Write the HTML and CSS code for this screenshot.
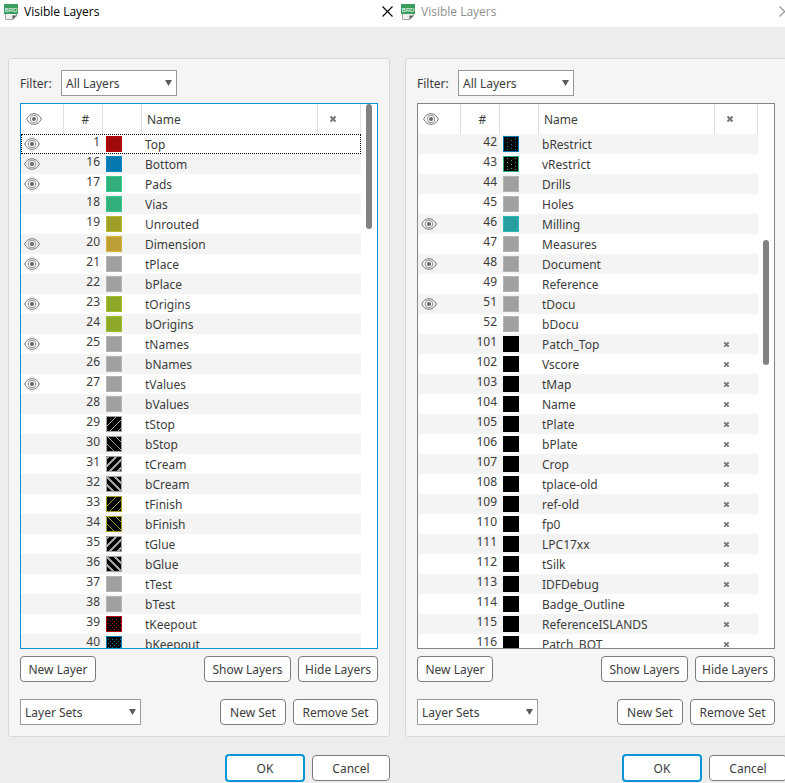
FILE: index.html
```html
<!DOCTYPE html>
<html lang="en">
<head>
<meta charset="utf-8">
<title>Visible Layers</title>
<link rel="stylesheet" href="styles.css">
</head>
<body>
<svg class="defs" aria-hidden="true">
  <symbol id="brd" viewBox="0 0 14 16">
    <path d="M1.500 7V15.500H9L12.500 12V7Z" fill="#f0f0f0" stroke="#a5a5a5"/>
    <path d="M8.500 15.500V11.500H12.500Z" fill="#555"/>
    <rect x="0" y="0" width="14" height="10" fill="#3a9e5f"/>
    <text x="7" y="7.500" text-anchor="middle" class="brd-text">BRD</text>
  </symbol>
  <symbol id="eye" viewBox="0 0 16 12">
    <path d="M.6 6C2.500 2.300 5 .7 8 .7S13.500 2.300 15.400 6C13.500 9.700 11 11.300 8 11.300S2.500 9.700 .6 6Z" fill="none" stroke="#747474"/>
    <circle cx="8" cy="6" r="3.800" fill="none" stroke="#8a8a8a" stroke-width=".9"/>
    <circle cx="8" cy="6" r="2" fill="#666"/>
  </symbol>
  <symbol id="mark" viewBox="0 0 8 8"><path d="M1.500 1.500L6.500 6.500M6.500 1.500L1.500 6.500" stroke="#757575" stroke-width="2"/></symbol>
  <symbol id="close" viewBox="0 0 11 11"><path d="M.5 .5L10.500 10.500M10.500 .5L.5 10.500" stroke="currentColor" stroke-width="1.100"/></symbol>
  <symbol id="thin-up" viewBox="0 0 16 16"><rect width="16" height="16"/><path d="M0 11L11 0M3 16L16 3M11 16L16 11" stroke="currentColor"/><rect x=".5" y=".5" width="15" height="15" fill="none" stroke="currentColor"/></symbol>
  <symbol id="thin-down" viewBox="0 0 16 16"><rect width="16" height="16"/><path d="M9 0L16 7M1 0L16 15M0 7L9 16" stroke="currentColor"/><rect x=".5" y=".5" width="15" height="15" fill="none" stroke="currentColor"/></symbol>
  <symbol id="wide-up" viewBox="0 0 16 16"><rect width="16" height="16"/><path d="M0 3L3 0M0 11L11 0M3 16L16 3M11 16L16 11" stroke="currentColor" stroke-width="2"/><rect x=".5" y=".5" width="15" height="15" fill="none" stroke="currentColor"/></symbol>
  <symbol id="wide-down" viewBox="0 0 16 16"><rect width="16" height="16"/><path d="M8 0L16 8M0 0L16 16M0 8L8 16" stroke="currentColor" stroke-width="2"/><rect x=".5" y=".5" width="15" height="15" fill="none" stroke="currentColor"/></symbol>
  <symbol id="dots" viewBox="0 0 16 16"><rect width="16" height="16"/><path d="M2 3.500H15M2 7.500H15M2 11.500H15" stroke="currentColor" stroke-dasharray="1 3"/><path d="M4 5.500H15M4 9.500H15M4 13.500H15" stroke="currentColor" stroke-dasharray="1 3"/><rect x=".5" y=".5" width="15" height="15" fill="none" stroke="currentColor"/></symbol>
  <symbol id="sparse" viewBox="0 0 16 16"><rect width="16" height="16"/><path d="M4 2.500H15M4 6.500H15M4 10.500H15M4 13.500H15" stroke="currentColor" stroke-dasharray="1 7"/><path d="M8 4.500H15M8 8.500H15M8 12.500H15" stroke="currentColor" stroke-dasharray="1 7"/><rect x=".5" y=".5" width="15" height="15" fill="none" stroke="currentColor"/></symbol>
</svg>
<main class="desktop">
  <section class="dialog">
    <header class="titlebar">
      <svg class="app-icon"><use href="#brd"/></svg>
      <h1>Visible Layers</h1>
      <button class="close" aria-label="Close"><svg><use href="#close"/></svg></button>
    </header>
    <div class="panel">
      <div class="filter">
        <label for="filter-a">Filter:</label>
        <span class="combo filter-combo"><select id="filter-a"><option>All Layers</option></select></span>
      </div>
      <div class="list active">
        <table>
          <thead><tr><th class="vis"><svg class="eye"><use href="#eye"/></svg></th><th class="num">#</th><th class="color"></th><th class="name">Name</th><th class="used"><svg class="mark"><use href="#mark"/></svg></th></tr></thead>
          <tbody>
            <tr class="current"><td class="vis"><svg class="eye"><use href="#eye"/></svg></td><td class="num">1</td><td class="color"><i class="swatch red"></i></td><td class="name">Top</td><td class="used"></td></tr>
            <tr><td class="vis"><svg class="eye"><use href="#eye"/></svg></td><td class="num">16</td><td class="color"><i class="swatch blue"></i></td><td class="name">Bottom</td><td class="used"></td></tr>
            <tr><td class="vis"><svg class="eye"><use href="#eye"/></svg></td><td class="num">17</td><td class="color"><i class="swatch green"></i></td><td class="name">Pads</td><td class="used"></td></tr>
            <tr><td class="vis"></td><td class="num">18</td><td class="color"><i class="swatch green"></i></td><td class="name">Vias</td><td class="used"></td></tr>
            <tr><td class="vis"></td><td class="num">19</td><td class="color"><i class="swatch olive"></i></td><td class="name">Unrouted</td><td class="used"></td></tr>
            <tr><td class="vis"><svg class="eye"><use href="#eye"/></svg></td><td class="num">20</td><td class="color"><i class="swatch gold"></i></td><td class="name">Dimension</td><td class="used"></td></tr>
            <tr><td class="vis"><svg class="eye"><use href="#eye"/></svg></td><td class="num">21</td><td class="color"><i class="swatch gray"></i></td><td class="name">tPlace</td><td class="used"></td></tr>
            <tr><td class="vis"></td><td class="num">22</td><td class="color"><i class="swatch gray"></i></td><td class="name">bPlace</td><td class="used"></td></tr>
            <tr><td class="vis"><svg class="eye"><use href="#eye"/></svg></td><td class="num">23</td><td class="color"><i class="swatch lime"></i></td><td class="name">tOrigins</td><td class="used"></td></tr>
            <tr><td class="vis"></td><td class="num">24</td><td class="color"><i class="swatch lime"></i></td><td class="name">bOrigins</td><td class="used"></td></tr>
            <tr><td class="vis"><svg class="eye"><use href="#eye"/></svg></td><td class="num">25</td><td class="color"><i class="swatch gray"></i></td><td class="name">tNames</td><td class="used"></td></tr>
            <tr><td class="vis"></td><td class="num">26</td><td class="color"><i class="swatch gray"></i></td><td class="name">bNames</td><td class="used"></td></tr>
            <tr><td class="vis"><svg class="eye"><use href="#eye"/></svg></td><td class="num">27</td><td class="color"><i class="swatch gray"></i></td><td class="name">tValues</td><td class="used"></td></tr>
            <tr><td class="vis"></td><td class="num">28</td><td class="color"><i class="swatch gray"></i></td><td class="name">bValues</td><td class="used"></td></tr>
            <tr><td class="vis"></td><td class="num">29</td><td class="color"><svg class="pattern ink-gray"><use href="#thin-up"/></svg></td><td class="name">tStop</td><td class="used"></td></tr>
            <tr><td class="vis"></td><td class="num">30</td><td class="color"><svg class="pattern ink-gray"><use href="#thin-down"/></svg></td><td class="name">bStop</td><td class="used"></td></tr>
            <tr><td class="vis"></td><td class="num">31</td><td class="color"><svg class="pattern ink-gray"><use href="#wide-up"/></svg></td><td class="name">tCream</td><td class="used"></td></tr>
            <tr><td class="vis"></td><td class="num">32</td><td class="color"><svg class="pattern ink-gray"><use href="#wide-down"/></svg></td><td class="name">bCream</td><td class="used"></td></tr>
            <tr><td class="vis"></td><td class="num">33</td><td class="color"><svg class="pattern ink-olive"><use href="#thin-up"/></svg></td><td class="name">tFinish</td><td class="used"></td></tr>
            <tr><td class="vis"></td><td class="num">34</td><td class="color"><svg class="pattern ink-olive"><use href="#thin-down"/></svg></td><td class="name">bFinish</td><td class="used"></td></tr>
            <tr><td class="vis"></td><td class="num">35</td><td class="color"><svg class="pattern ink-gray"><use href="#wide-up"/></svg></td><td class="name">tGlue</td><td class="used"></td></tr>
            <tr><td class="vis"></td><td class="num">36</td><td class="color"><svg class="pattern ink-gray"><use href="#wide-down"/></svg></td><td class="name">bGlue</td><td class="used"></td></tr>
            <tr><td class="vis"></td><td class="num">37</td><td class="color"><i class="swatch gray"></i></td><td class="name">tTest</td><td class="used"></td></tr>
            <tr><td class="vis"></td><td class="num">38</td><td class="color"><i class="swatch gray"></i></td><td class="name">bTest</td><td class="used"></td></tr>
            <tr><td class="vis"></td><td class="num">39</td><td class="color"><svg class="pattern ink-red"><use href="#dots"/></svg></td><td class="name">tKeepout</td><td class="used"></td></tr>
            <tr><td class="vis"></td><td class="num">40</td><td class="color"><svg class="pattern ink-blue"><use href="#dots"/></svg></td><td class="name">bKeepout</td><td class="used"></td></tr>
          </tbody>
        </table>
        <div class="thumb at-top"></div>
      </div>
      <div class="actions">
        <button class="new-layer first">New Layer</button>
        <button class="show">Show Layers</button>
        <button class="hide">Hide Layers</button>
      </div>
      <div class="actions sets">
        <span class="combo sets-combo first"><select aria-label="Layer Sets"><option>Layer Sets</option></select></span>
        <button class="new-set">New Set</button>
        <button class="remove-set">Remove Set</button>
      </div>
    </div>
    <footer class="confirm">
      <button class="ok">OK</button>
      <button class="cancel">Cancel</button>
    </footer>
  </section>

  <section class="dialog inactive">
    <header class="titlebar">
      <svg class="app-icon"><use href="#brd"/></svg>
      <h1>Visible Layers</h1>
      <button class="close" aria-label="Close"><svg><use href="#close"/></svg></button>
    </header>
    <div class="panel">
      <div class="filter">
        <label for="filter-b">Filter:</label>
        <span class="combo filter-combo"><select id="filter-b"><option>All Layers</option></select></span>
      </div>
      <div class="list">
        <table class="odd-shaded">
          <thead><tr><th class="vis"><svg class="eye"><use href="#eye"/></svg></th><th class="num">#</th><th class="color"></th><th class="name">Name</th><th class="used"><svg class="mark"><use href="#mark"/></svg></th></tr></thead>
          <tbody>
            <tr><td class="vis"></td><td class="num">42</td><td class="color"><svg class="pattern ink-blue"><use href="#sparse"/></svg></td><td class="name">bRestrict</td><td class="used"></td></tr>
            <tr><td class="vis"></td><td class="num">43</td><td class="color"><svg class="pattern ink-green"><use href="#sparse"/></svg></td><td class="name">vRestrict</td><td class="used"></td></tr>
            <tr><td class="vis"></td><td class="num">44</td><td class="color"><i class="swatch gray"></i></td><td class="name">Drills</td><td class="used"></td></tr>
            <tr><td class="vis"></td><td class="num">45</td><td class="color"><i class="swatch gray"></i></td><td class="name">Holes</td><td class="used"></td></tr>
            <tr><td class="vis"><svg class="eye"><use href="#eye"/></svg></td><td class="num">46</td><td class="color"><i class="swatch teal"></i></td><td class="name">Milling</td><td class="used"></td></tr>
            <tr><td class="vis"></td><td class="num">47</td><td class="color"><i class="swatch gray"></i></td><td class="name">Measures</td><td class="used"></td></tr>
            <tr><td class="vis"><svg class="eye"><use href="#eye"/></svg></td><td class="num">48</td><td class="color"><i class="swatch gray"></i></td><td class="name">Document</td><td class="used"></td></tr>
            <tr><td class="vis"></td><td class="num">49</td><td class="color"><i class="swatch gray"></i></td><td class="name">Reference</td><td class="used"></td></tr>
            <tr><td class="vis"><svg class="eye"><use href="#eye"/></svg></td><td class="num">51</td><td class="color"><i class="swatch gray"></i></td><td class="name">tDocu</td><td class="used"></td></tr>
            <tr><td class="vis"></td><td class="num">52</td><td class="color"><i class="swatch gray"></i></td><td class="name">bDocu</td><td class="used"></td></tr>
            <tr><td class="vis"></td><td class="num">101</td><td class="color"><i class="swatch black"></i></td><td class="name">Patch_Top</td><td class="used"><svg class="mark"><use href="#mark"/></svg></td></tr>
            <tr><td class="vis"></td><td class="num">102</td><td class="color"><i class="swatch black"></i></td><td class="name">Vscore</td><td class="used"><svg class="mark"><use href="#mark"/></svg></td></tr>
            <tr><td class="vis"></td><td class="num">103</td><td class="color"><i class="swatch black"></i></td><td class="name">tMap</td><td class="used"><svg class="mark"><use href="#mark"/></svg></td></tr>
            <tr><td class="vis"></td><td class="num">104</td><td class="color"><i class="swatch black"></i></td><td class="name">Name</td><td class="used"><svg class="mark"><use href="#mark"/></svg></td></tr>
            <tr><td class="vis"></td><td class="num">105</td><td class="color"><i class="swatch black"></i></td><td class="name">tPlate</td><td class="used"><svg class="mark"><use href="#mark"/></svg></td></tr>
            <tr><td class="vis"></td><td class="num">106</td><td class="color"><i class="swatch black"></i></td><td class="name">bPlate</td><td class="used"><svg class="mark"><use href="#mark"/></svg></td></tr>
            <tr><td class="vis"></td><td class="num">107</td><td class="color"><i class="swatch black"></i></td><td class="name">Crop</td><td class="used"><svg class="mark"><use href="#mark"/></svg></td></tr>
            <tr><td class="vis"></td><td class="num">108</td><td class="color"><i class="swatch black"></i></td><td class="name">tplace-old</td><td class="used"><svg class="mark"><use href="#mark"/></svg></td></tr>
            <tr><td class="vis"></td><td class="num">109</td><td class="color"><i class="swatch black"></i></td><td class="name">ref-old</td><td class="used"><svg class="mark"><use href="#mark"/></svg></td></tr>
            <tr><td class="vis"></td><td class="num">110</td><td class="color"><i class="swatch black"></i></td><td class="name">fp0</td><td class="used"><svg class="mark"><use href="#mark"/></svg></td></tr>
            <tr><td class="vis"></td><td class="num">111</td><td class="color"><i class="swatch black"></i></td><td class="name">LPC17xx</td><td class="used"><svg class="mark"><use href="#mark"/></svg></td></tr>
            <tr><td class="vis"></td><td class="num">112</td><td class="color"><i class="swatch black"></i></td><td class="name">tSilk</td><td class="used"><svg class="mark"><use href="#mark"/></svg></td></tr>
            <tr><td class="vis"></td><td class="num">113</td><td class="color"><i class="swatch black"></i></td><td class="name">IDFDebug</td><td class="used"><svg class="mark"><use href="#mark"/></svg></td></tr>
            <tr><td class="vis"></td><td class="num">114</td><td class="color"><i class="swatch black"></i></td><td class="name">Badge_Outline</td><td class="used"><svg class="mark"><use href="#mark"/></svg></td></tr>
            <tr><td class="vis"></td><td class="num">115</td><td class="color"><i class="swatch black"></i></td><td class="name">ReferenceISLANDS</td><td class="used"><svg class="mark"><use href="#mark"/></svg></td></tr>
            <tr><td class="vis"></td><td class="num">116</td><td class="color"><i class="swatch black"></i></td><td class="name">Patch_BOT</td><td class="used"><svg class="mark"><use href="#mark"/></svg></td></tr>
          </tbody>
        </table>
        <div class="thumb at-quarter"></div>
      </div>
      <div class="actions">
        <button class="new-layer first">New Layer</button>
        <button class="show">Show Layers</button>
        <button class="hide">Hide Layers</button>
      </div>
      <div class="actions sets">
        <span class="combo sets-combo first"><select aria-label="Layer Sets"><option>Layer Sets</option></select></span>
        <button class="new-set">New Set</button>
        <button class="remove-set">Remove Set</button>
      </div>
    </div>
    <footer class="confirm">
      <button class="ok">OK</button>
      <button class="cancel">Cancel</button>
    </footer>
  </section>
</main>
</body>
</html>
```
FILE: styles.css
```css
* { box-sizing: border-box; }

body {
  margin: 0;
  overflow: hidden;
  background: #ededed;
  color: #3c3c3c;
  font: 12px/16px "Noto Sans", "Open Sans", sans-serif;
}

button, select { font: inherit; color: inherit; }
svg { display: block; }
.defs { position: absolute; width: 0; height: 0; }

.desktop {
  display: grid;
  grid-template-columns: repeat(2, minmax(397px, 1fr));
  grid-template-rows: 100vh;
}

.dialog { display: flex; flex-direction: column; min-height: 0; }

/* Title bar */
.titlebar {
  display: flex;
  align-items: center;
  height: 27px;
  padding: 0 4px 4px;
  background: #fff;
  color: #000;
}
.app-icon { width: 14px; height: 16px; }
.brd-text { font: 6px "Liberation Sans", sans-serif; fill: #fff; }
.titlebar h1 {
  flex: 1;
  margin: 0 6px;
  font: 12px/16px "Open Sans", sans-serif;
}
.close { padding: 0; border: 0; background: none; }
.close svg { width: 11px; height: 11px; }
.inactive .titlebar { color: #8f8f8f; }

/* Panel */
.panel {
  display: flex;
  flex: 1;
  flex-direction: column;
  min-height: 0;
  margin: 31px 7px 0 8px;
  padding: 11px;
  border: 1px solid #d8d8d8;
  border-radius: 3px;
  background: #f5f5f5;
}
.filter { display: flex; align-items: center; }
.filter label { width: 41px; padding-top: 2px; }

.combo { position: relative; display: block; height: 26px; }
.combo::after {
  content: "";
  position: absolute;
  top: 10px;
  right: 5px;
  width: 7px;
  height: 6px;
  background: #5c5c5c;
  clip-path: polygon(0 0, 100% 0, 50% 100%);
  pointer-events: none;
}
.combo select {
  appearance: none;
  width: 100%;
  height: 100%;
  padding: 2px 4px 0;
  border: 1px solid #999;
  border-radius: 0;
  background: #fff;
}
.filter-combo { width: 116px; }
.sets-combo { width: 121px; }

/* Layer list */
.list {
  position: relative;
  flex: 1;
  min-height: 0;
  margin: 7px 0;
  padding-right: 16px;
  overflow: hidden;
  border: 1px solid #84848c;
  background: #fff;
}
.list.active { border-color: #0d94d8; }

table { width: 100%; table-layout: fixed; border-collapse: separate; border-spacing: 0; }
th, td { padding: 0; font-weight: normal; text-align: left; }
th { height: 30px; border-right: 1px solid #e0e0e0; }
td { height: 20px; line-height: 18px; }
.vis { width: 43px; }
.num { width: 39px; }
.color { width: 39px; }
.used { width: 43px; }
th.vis { padding-left: 5px; }
td.vis { padding-left: 3px; }
th.num { padding: 2px 0 0 5px; text-align: center; }
td.num { padding: 0 3px 4px 0; line-height: 16px; text-align: right; }
td.color { padding-left: 3px; }
th.name { padding: 2px 0 0 5px; }
td.name { padding: 2px 0 0 3px; }
th.used { padding-left: 11px; }
td.used { padding-left: 8px; }
tbody tr:nth-child(even) { background: #f4f4f4; }
.odd-shaded tbody tr:nth-child(even) { background: #fff; }
.odd-shaded tbody tr:nth-child(odd) { background: #f4f4f4; }
.current { outline: 1px dotted #000; outline-offset: -1px; }

.eye { width: 16px; height: 12px; }
.mark { width: 8px; height: 8px; }
td .mark { width: 7px; height: 7px; }

.swatch, .pattern { display: block; width: 16px; height: 16px; }
.swatch { border: 1px solid; }
.pattern { shape-rendering: crispEdges; }
.red { background: #a00a0a; border-color: #b90a0a; }
.blue { background: #0578b0; border-color: #0a8acb; }
.green { background: #32b07b; border-color: #37ca8d; }
.olive { background: #a0a028; border-color: #b9b92d; }
.gold { background: #bd9e37; border-color: #d8b53f; }
.gray { background: #a0a0a0; border-color: #b4b4b4; }
.lime { background: #8ea828; border-color: #a2c02e; }
.teal { background: #28a0a0; border-color: #2eb8b8; }
.black { background: #000; border-color: #000; }
.ink-gray { color: #a0a0a0; }
.ink-olive { color: #a0a028; }
.ink-red { color: #b40a0a; }
.ink-blue { color: #0578b0; }
.ink-green { color: #32b07b; }

.thumb {
  position: absolute;
  right: 5px;
  width: 6px;
  height: 23%;
  border-radius: 3px;
  background: #828282;
}
.at-top { top: 0; }
.at-quarter { top: 25%; }

/* Buttons */
.actions { display: flex; gap: 7px; }
.first { margin-right: auto; }
.sets { margin-top: 17px; }
.actions button, .confirm button {
  height: 26px;
  padding: 2px 0 0;
  border: 1px solid #7d7d7d;
  border-radius: 4px;
  background: #fff;
  white-space: nowrap;
}
.new-layer { width: 76px; }
.show { width: 87px; }
.hide { width: 80px; }
.new-set { width: 66px; }
.remove-set { width: 85px; }
.confirm {
  display: flex;
  align-items: center;
  justify-content: flex-end;
  gap: 7px;
  padding: 17px 7px 1px;
}
.confirm .ok { width: 80px; height: 28px; border: 2px solid #0d94d8; }
.confirm .cancel { width: 78px; }
```
